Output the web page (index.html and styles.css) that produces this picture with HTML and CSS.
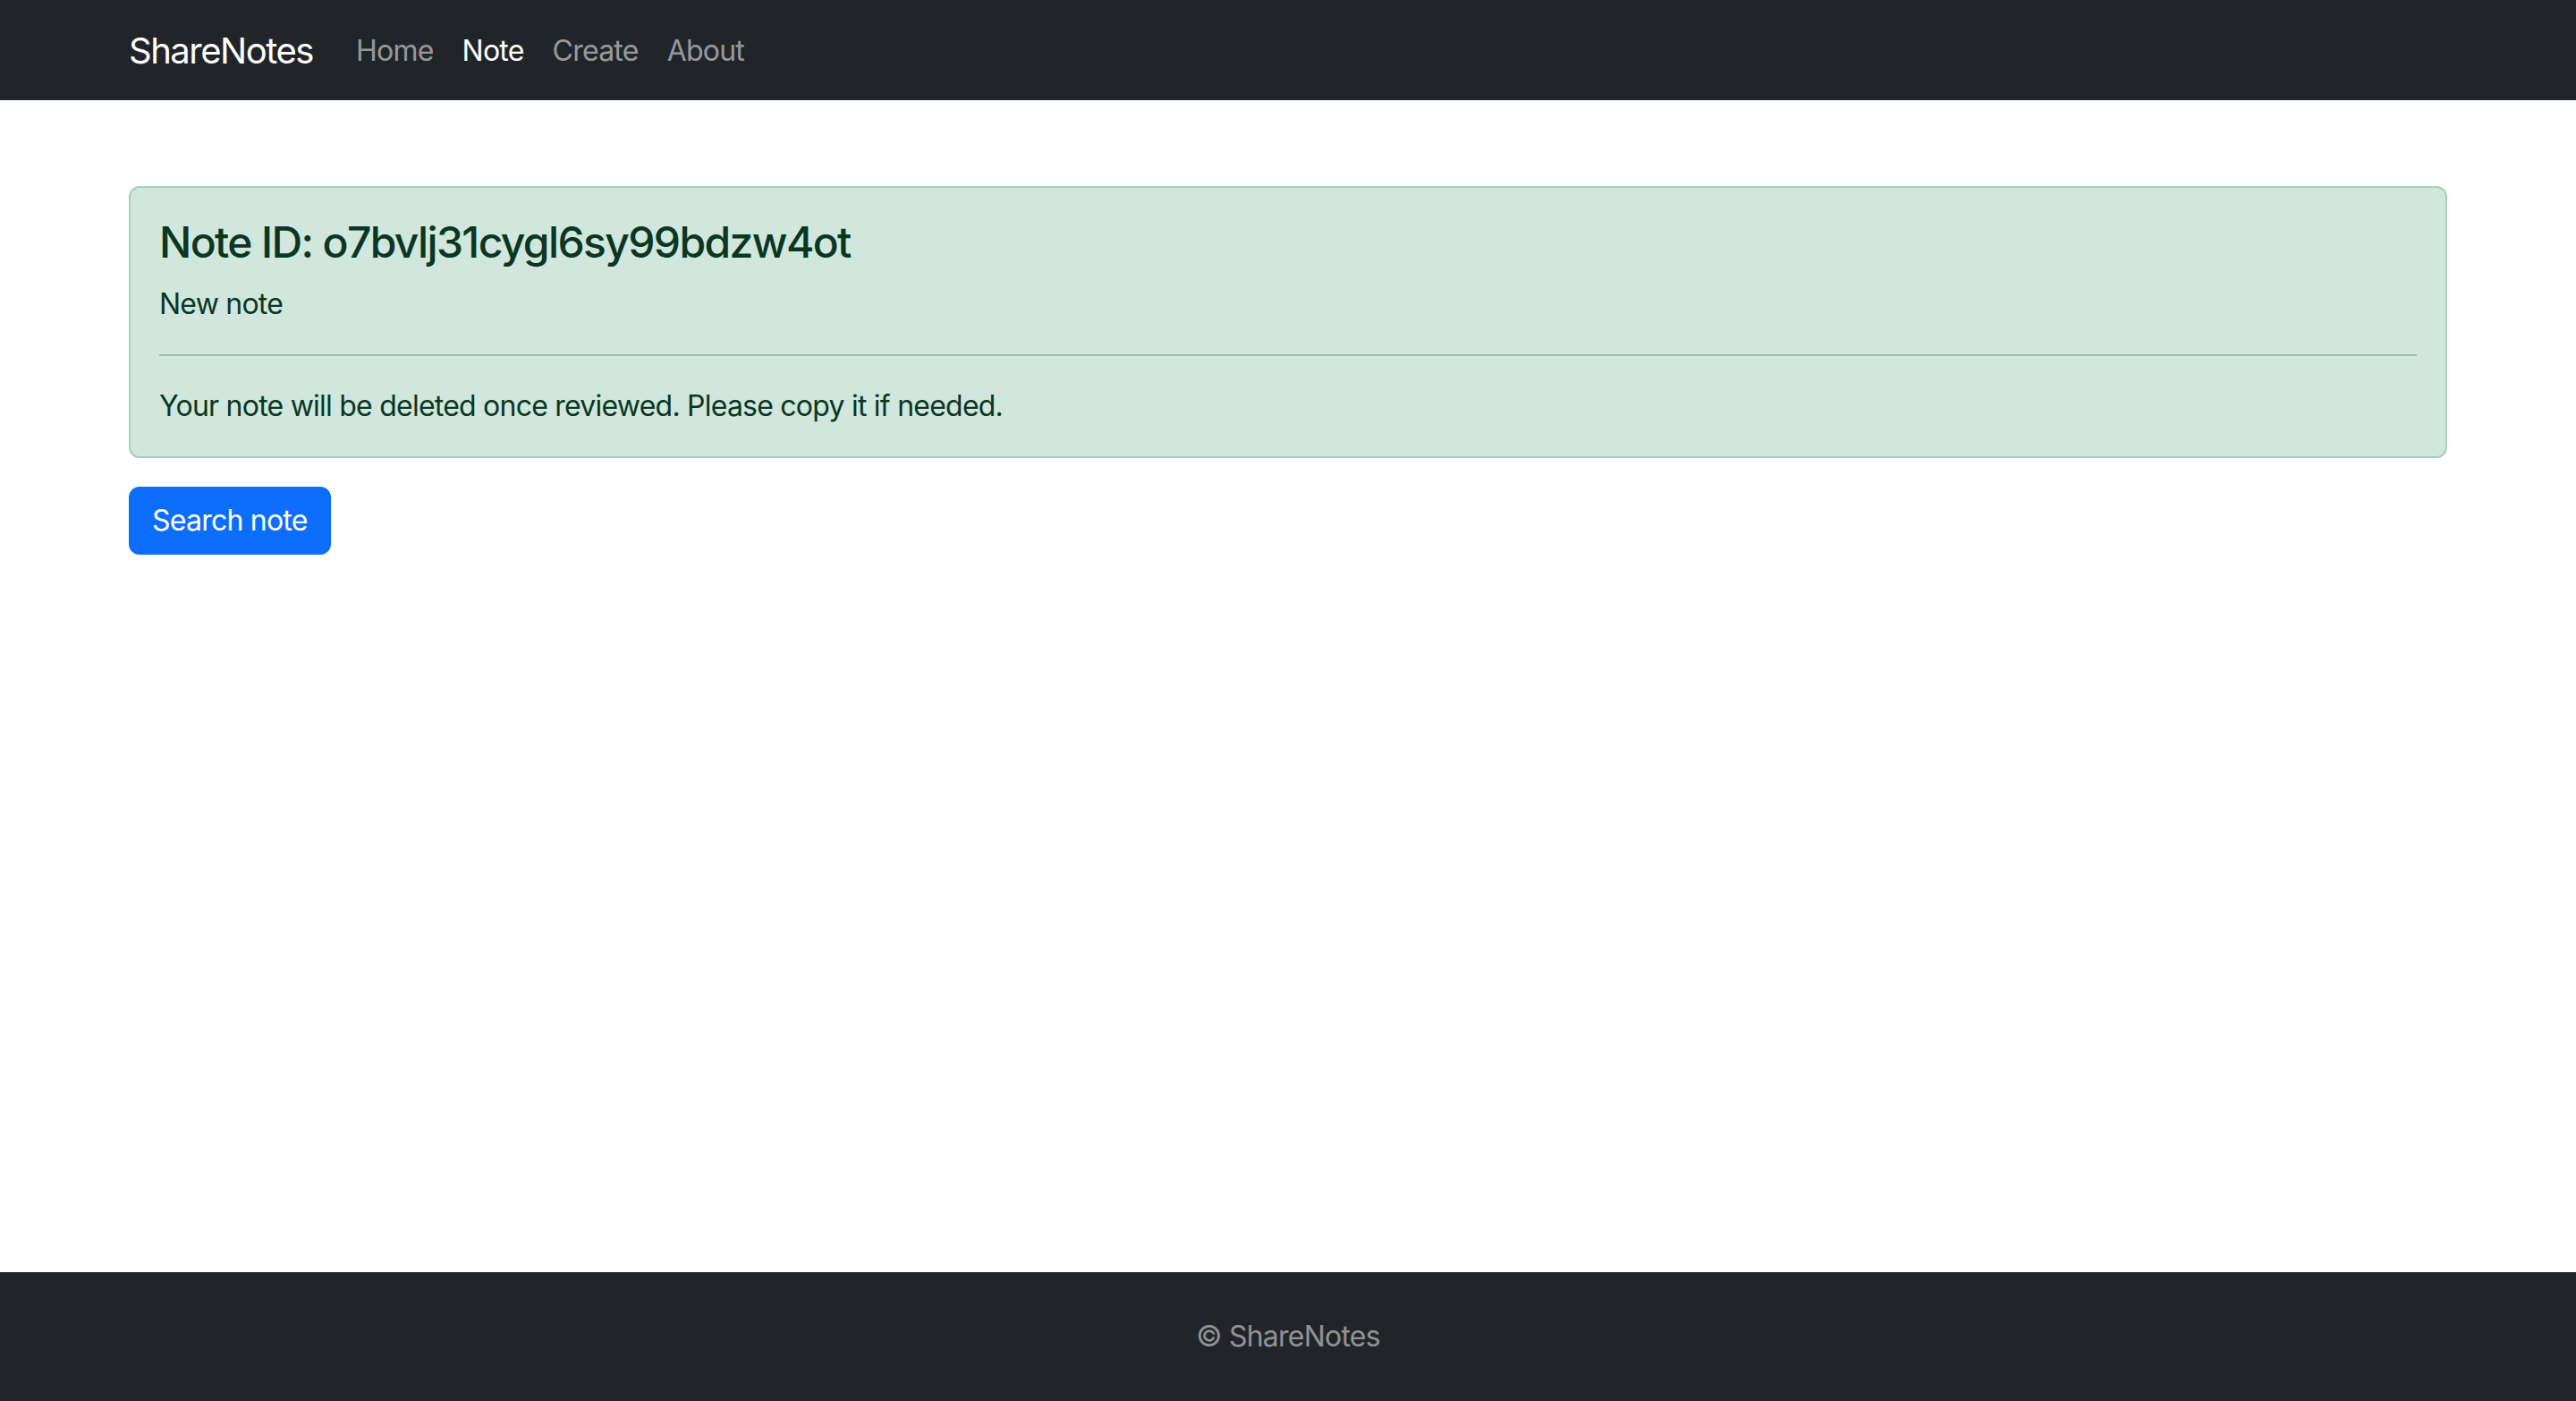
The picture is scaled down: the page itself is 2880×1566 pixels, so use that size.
FILE: index.html
```html
<!DOCTYPE html>
<html lang="en">
<head>
<meta charset="utf-8">
<title>ShareNotes</title>
<link rel="stylesheet" href="styles.css">
</head>
<body>
<nav class="navbar">
  <div class="container nav-inner">
    <a class="brand" href="#">ShareNotes</a>
    <ul class="nav-links">
      <li><a class="nav-link" href="#">Home</a></li>
      <li><a class="nav-link active" href="#">Note</a></li>
      <li><a class="nav-link" href="#">Create</a></li>
      <li><a class="nav-link" href="#">About</a></li>
    </ul>
  </div>
</nav>
<main class="container main">
  <div class="alert">
    <h4 class="alert-heading">Note ID: o7bvlj31cygl6sy99bdzw4ot</h4>
    <p class="note-text">New note</p>
    <hr class="divider">
    <p class="note-info">Your note will be deleted once reviewed. Please copy it if needed.</p>
  </div>
  <a class="btn" href="#">Search note</a>
</main>
<footer class="footer">
  <span class="footer-text">© ShareNotes</span>
</footer>
</body>
</html>
```

FILE: styles.css
```css
* { box-sizing: border-box; }
html, body { margin: 0; padding: 0; }
body {
  font-family: "Inter", "Roboto", "Liberation Sans", sans-serif;
  font-size: 32px;
  line-height: 1.5;
  letter-spacing: -0.024em;
  color: #212529;
  background: #fff;
  min-height: 100vh;
  display: flex;
  flex-direction: column;
}
a { text-decoration: none; }
.container {
  width: 100%;
  padding: 0 144px;
}
.navbar {
  background: #212529;
  height: 112px;
  display: flex;
  align-items: center;
}
.nav-inner {
  display: flex;
  align-items: center;
  padding-top: 2px;
}
.brand {
  color: #fff;
  font-size: 40px;
  margin-right: 32px;
  line-height: 1.5;
  letter-spacing: -0.037em;
}
.nav-links {
  list-style: none;
  margin: 0;
  padding: 0;
  display: flex;
}
.nav-link {
  display: block;
  padding: 16px 16px;
  color: rgba(255,255,255,0.55);
}
.nav-link.active { color: #fff; }
.main {
  padding-top: 96px;
  flex: 1;
}
.alert {
  background: #d1e7dd;
  border: 2px solid #a3cfbb;
  border-radius: 12px;
  padding: 32px 32px;
  color: #0a3622;
  margin-bottom: 32px;
}
.alert-heading {
  margin: 0 0 16px;
  font-size: 48px;
  font-weight: 500;
  line-height: 1.2;
  letter-spacing: -0.034em;
}
.note-text { margin: 0 0 32px; }
.divider {
  margin: 32px 0;
  border: 0;
  border-top: 2px solid #0a3622;
  opacity: 0.25;
}
.note-info { margin: 0; }
.btn {
  display: inline-block;
  background: #0d6efd;
  color: #fff;
  border-radius: 12px;
  padding: 12px 24px;
  font-size: 32px;
  line-height: 1.5;
  border: 2px solid #0d6efd;
}
.footer {
  background: #212529;
  padding: 48px 0;
  text-align: center;
}
.footer-text {
  color: rgba(255,255,255,0.5);
}
```
